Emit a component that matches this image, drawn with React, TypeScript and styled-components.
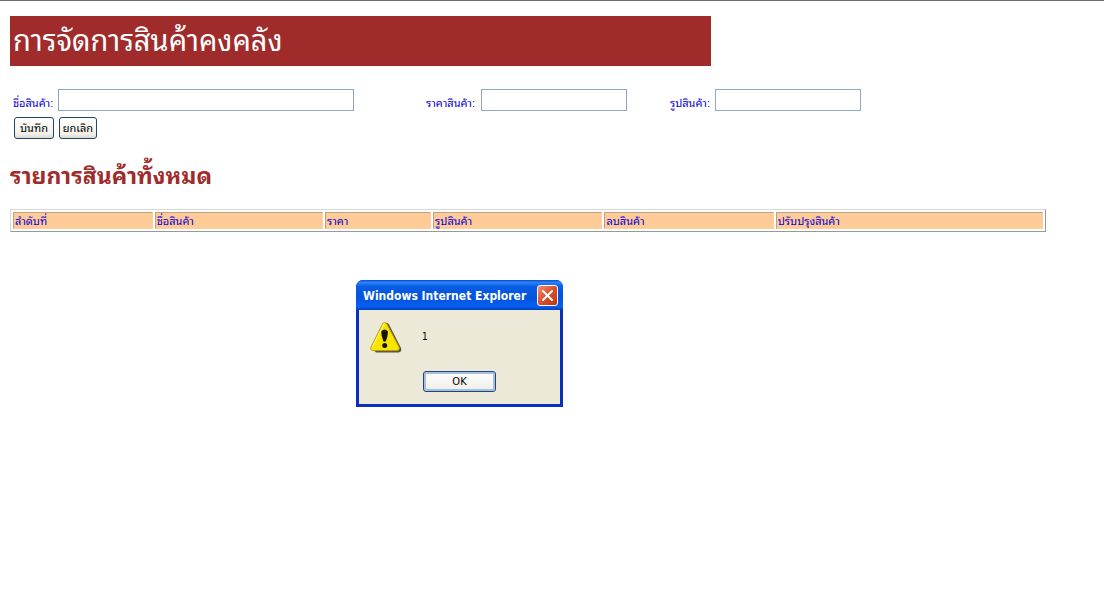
import React from "react";
import styled, { createGlobalStyle } from "styled-components";

const GlobalStyle = createGlobalStyle`
  * { box-sizing: border-box; }
  body {
    margin: 0;
    background: #fff;
    color: #0a00d8;
    font-family: "Liberation Sans", "Noto Sans Thai Looped", "Loma", sans-serif;
    font-size: 11px;
  }
`;

const Page = styled.div`
  min-height: 100vh;
  border-top: 1px solid #6e6c68;
  padding: 15px 58px 16px 10px;
`;

const Banner = styled.h1`
  width: 67.7%;
  min-width: 300px;
  height: 50px;
  margin: 0 0 23px;
  padding: 0 3px;
  background: #a02b2b;
  color: #fff;
  font-size: 29px;
  font-weight: 400;
  line-height: 50px;
  white-space: nowrap;
`;

const Form = styled.form`
  padding: 0 3px;
`;

const Fields = styled.div`
  display: grid;
  grid-template-columns: 413fr 244fr 373fr;
`;

const Field = styled.label`
  display: flex;
  align-items: center;
  gap: 4px;
  height: 22px;
  white-space: nowrap;
`;

const Caption = styled.span<{ $width: number }>`
  width: ${(p) => p.$width}px;
  padding-top: 6px;
  line-height: 16px;
`;

const TextBox = styled.input<{ $width: number }>`
  width: ${(p) => p.$width}px;
  height: 22px;
  padding: 1px 3px;
  border: 1px solid #8fa7bf;
  background: #fff;
  font: inherit;
`;

const Actions = styled.div`
  display: flex;
  gap: 5px;
  margin-top: 6px;
  padding-left: 1px;
`;

const FormButton = styled.button<{ $width: number }>`
  width: ${(p) => p.$width}px;
  height: 22px;
  padding: 0;
  border: 1px solid #1f4668;
  border-radius: 3px;
  background: linear-gradient(#fff, #f1f0ea 80%, #dcd8cc);
  color: #000;
  font: inherit;
  line-height: 18px;
  white-space: nowrap;
`;

const ListTitle = styled.h2`
  margin: 20px 0 16px;
  color: #a02b2b;
  font-size: 23px;
  font-weight: 700;
  line-height: 34px;
  white-space: nowrap;
`;

const ProductTable = styled.table`
  width: 100%;
  table-layout: fixed;
  border: 1px solid #d8d8d4;
  border-right-color: #989898;
  border-bottom-color: #989898;
  border-spacing: 2px;
`;

const HeadCell = styled.th<{ $share: number }>`
  width: ${(p) => p.$share}%;
  height: 17px;
  padding: 2px 1px 0;
  border: 1px solid #fdd0a0;
  border-top-color: #bea283;
  border-left-color: #bea283;
  background: #fecb96;
  font-weight: 400;
  line-height: 13px;
  text-align: left;
  white-space: nowrap;
`;

const Dialog = styled.section`
  position: absolute;
  top: 280px;
  left: 356px;
  width: 207px;
  padding: 0 3px 3px;
  border-radius: 7px 7px 0 0;
  background: #0a2fc0;
  color: #000;
  font-family: "DejaVu Sans Condensed", "DejaVu Sans", sans-serif;
`;

const TitleBar = styled.header`
  display: flex;
  align-items: center;
  justify-content: space-between;
  height: 30px;
  margin: 0 -3px;
  padding: 1px 5px 0 7px;
  border-radius: 7px 7px 0 0;
  background: linear-gradient(#0a4bcc, #2a83f8 8%, #0a5ce4 22%, #0453dd 60%, #0560f4 88%, #0340b8);
`;

const DialogTitle = styled.h3`
  margin: 0;
  color: #fff;
  font-family: "DejaVu Sans Condensed", "DejaVu Sans", sans-serif;
  font-size: 12px;
  font-weight: 700;
  line-height: 20px;
  white-space: nowrap;
`;

const CloseButton = styled.button`
  display: flex;
  align-items: center;
  justify-content: center;
  width: 21px;
  height: 21px;
  padding: 0;
  border: 1px solid #fff;
  border-radius: 3px;
  background: linear-gradient(135deg, #ee9478, #dd5331 45%, #bd3413);
`;

const DialogBody = styled.div`
  padding: 11px 11px 12px;
  background: #ece9d8;
`;

const Message = styled.p`
  display: flex;
  align-items: center;
  gap: 20px;
  margin: 0 0 18px;
  font-size: 10px;
  line-height: 14px;
`;

const OkButton = styled.button`
  display: block;
  width: 73px;
  height: 21px;
  margin: 0 auto;
  padding: 0;
  border: 1px solid #234773;
  border-radius: 3px;
  box-shadow: inset 0 0 0 2px #a6bfe6;
  background: linear-gradient(#fff, #efeee8);
  color: #000;
  font-family: "DejaVu Sans Condensed", "DejaVu Sans", sans-serif;
  font-size: 11px;
  line-height: 17px;
`;

const fields = [
  { id: "name", label: "ชื่อสินค้า:", caption: 41, input: 296 },
  { id: "price", label: "ราคาสินค้า:", caption: 51, input: 146 },
  { id: "image", label: "รูปสินค้า:", caption: 41, input: 146 },
];

const columns = [
  { label: "ลำดับที่", share: 13.7 },
  { label: "ชื่อสินค้า", share: 16.5 },
  { label: "ราคา", share: 10.4 },
  { label: "รูปสินค้า", share: 16.6 },
  { label: "ลบสินค้า", share: 16.6 },
  { label: "ปรับปรุงสินค้า", share: 26.2 },
];

const WarningIcon = () => (
  <svg width="32" height="32" viewBox="0 0 32 32" aria-hidden="true">
    <path d="M15 2.5 Q17 .8 19 3.5 L31 27 Q32 31 28.5 31.5 H6 L4 29Z" fill="#55534c" />
    <path d="M12.5 3 Q14.5 -.2 16.8 3 L29 26 Q30 29.4 26.8 29.6 H2.8 Q-.2 29.2 1 26Z" fill="#fbe500" stroke="#b5a100" />
    <path d="M14 2.5 L2.2 26.5" stroke="#fff88c" strokeWidth="1" />
    <path d="M11.2 10.5 Q14.6 6.5 18 10.5 Q18 15 15.8 20.5 H13.5 Q11.2 15 11.2 10.5Z" fill="#161400" />
    <circle cx="14.7" cy="24.5" r="2.5" fill="#161400" />
  </svg>
);

export default function App() {
  return (
    <>
      <GlobalStyle />
      <Page>
        <Banner>การจัดการสินค้าคงคลัง</Banner>
        <Form onSubmit={(e) => e.preventDefault()}>
          <Fields>
            {fields.map((f) => (
              <Field key={f.id} htmlFor={f.id}>
                <Caption $width={f.caption}>{f.label}</Caption>
                <TextBox id={f.id} type="text" $width={f.input} />
              </Field>
            ))}
          </Fields>
          <Actions>
            <FormButton type="submit" $width={40}>บันทึก</FormButton>
            <FormButton type="reset" $width={38}>ยกเลิก</FormButton>
          </Actions>
        </Form>
        <ListTitle>รายการสินค้าทั้งหมด</ListTitle>
        <ProductTable>
          <thead>
            <tr>
              {columns.map((c) => (
                <HeadCell key={c.label} scope="col" $share={c.share}>{c.label}</HeadCell>
              ))}
            </tr>
          </thead>
        </ProductTable>
      </Page>
      <Dialog role="alertdialog" aria-labelledby="dialog-title">
        <TitleBar>
          <DialogTitle id="dialog-title">Windows Internet Explorer</DialogTitle>
          <CloseButton type="button" aria-label="Close">
            <svg width="13" height="13" viewBox="0 0 13 13" aria-hidden="true">
              <path d="M2 2 L11 11 M11 2 L2 11" stroke="#fff" strokeWidth="2" strokeLinecap="round" />
            </svg>
          </CloseButton>
        </TitleBar>
        <DialogBody>
          <Message>
            <WarningIcon />
            1
          </Message>
          <OkButton type="button">OK</OkButton>
        </DialogBody>
      </Dialog>
    </>
  );
}
